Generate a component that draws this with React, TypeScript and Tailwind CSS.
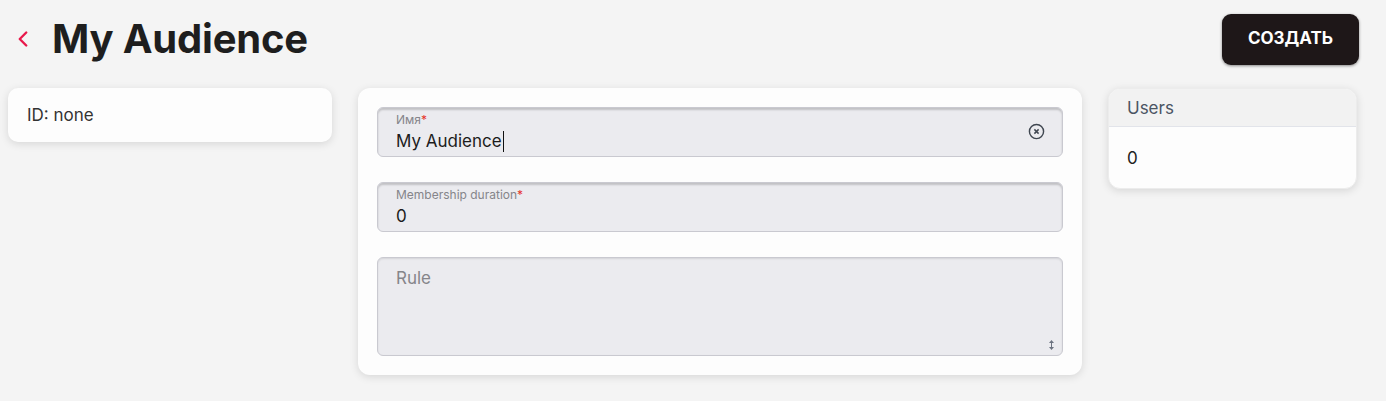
import { ChevronLeft } from 'lucide-react';

function Field({ label, value, required, caret }: { label: string; value: string; required?: boolean; caret?: boolean }) {
  return (
    <div className="relative h-[50px] rounded-md border border-[#c9c9d0] bg-[#ebebef] px-[18px] pt-[4px] shadow-[inset_0_2px_2px_rgba(0,0,0,0.18)]">
      <div className="text-[12px] leading-[16px] text-[#85858a]">
        {label}
        {required ? <span className="text-[#e5342a]">*</span> : null}
      </div>
      <div className="flex items-center text-[17px] leading-[26px] text-[#1c1c1c]">
        {value}
        {caret ? <span className="ml-[1px] inline-block h-[21px] w-[1px] bg-[#111]" /> : null}
      </div>
    </div>
  );
}

export default function App() {
  return (
    <div className="min-h-[401px] bg-[#f4f4f4] font-['Inter',sans-serif] text-[#222]">
      <div className="flex h-[78px] items-center justify-between pl-[10px] pr-[27px]">
        <div className="flex items-center gap-[16px]">
          <ChevronLeft className="h-[26px] w-[26px] text-[#e8194b]" strokeWidth={2.2} />
          <h1 className="text-[40px] font-bold leading-none tracking-[-0.2px] text-[#1e1e1e]">My Audience</h1>
        </div>
        <button className="h-[51px] w-[137px] rounded-[9px] bg-[#1e1718] text-[17px] font-bold text-white shadow-[0_1px_3px_rgba(0,0,0,0.45)]">
          СОЗДАТЬ
        </button>
      </div>
      <div className="mt-[10px] flex items-start gap-[26px] pl-[8px]">
        <div className="w-[324px] rounded-[10px] bg-[#fdfdfd] px-[19px] py-[16px] text-[17px] leading-[22px] text-[#333] shadow-[0_2px_8px_rgba(0,0,0,0.12)]">
          ID: none
        </div>
        <div className="flex w-[724px] flex-col gap-[25px] rounded-[12px] bg-[#fdfdfd] px-[19px] pt-[19px] pb-[19px] shadow-[0_2px_8px_rgba(0,0,0,0.12)]">
          <div className="relative">
            <Field label="Имя" value="My Audience" required caret />
            <svg className="absolute right-[18px] top-[16px] h-[17px] w-[17px] text-[#3f4650]" viewBox="0 0 24 24" fill="none" stroke="currentColor" strokeWidth={2}>
              <circle cx="12" cy="12" r="10" />
              <path d="M9 9l6 6M15 9l-6 6" />
            </svg>
          </div>
          <Field label="Membership duration" value="0" required />
          <div className="relative h-[99px] rounded-md border border-[#c9c9d0] bg-[#ebebef] px-[18px] pt-[8px] text-[17px] text-[#85858a] shadow-[inset_0_1px_2px_rgba(0,0,0,0.1)]">
            Rule
            <svg className="absolute bottom-[5px] right-[8px] h-[10px] w-[5px] text-[#6b7280]" viewBox="0 0 5 10" fill="currentColor">
              <path d="M2.5 0L5 3H0z" />
              <rect x="2" y="3" width="1" height="4" />
              <path d="M2.5 10L5 7H0z" />
            </svg>
          </div>
        </div>
        <div className="w-[249px] overflow-hidden rounded-[12px] border border-[#ececec] bg-[#fdfdfd] shadow-[0_2px_8px_rgba(0,0,0,0.12)]">
          <div className="h-[38px] border-b border-[#e2e4ea] bg-[#f2f2f2] px-[18px] pt-[8px] text-[17px] leading-[22px] text-[#4b5563]">Users</div>
          <div className="px-[18px] pt-[20px] pb-[19px] text-[17px] leading-[22px] text-[#222]">0</div>
        </div>
      </div>
    </div>
  );
}
